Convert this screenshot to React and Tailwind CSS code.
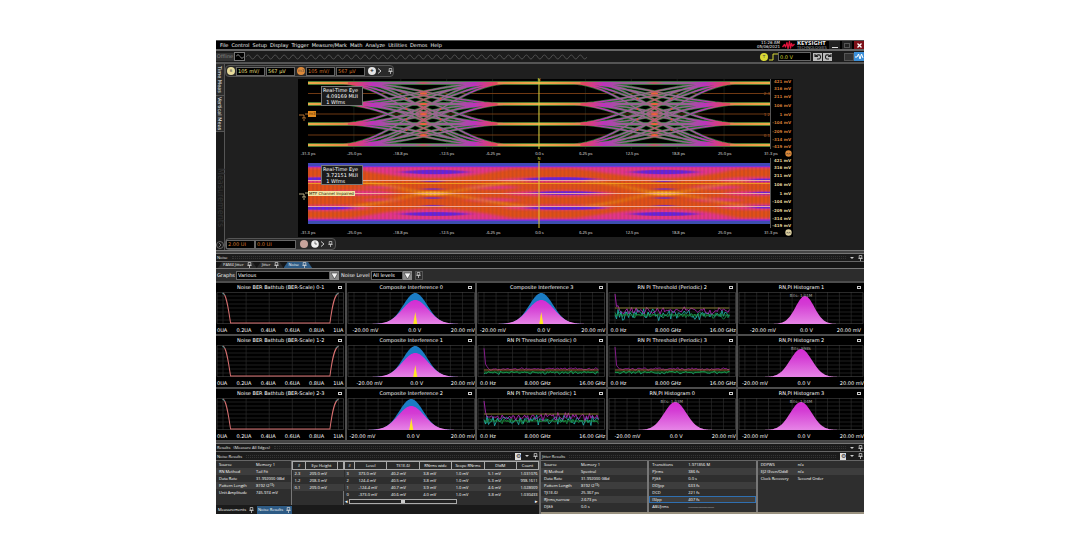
import React from "react";

const LEVELS = [4, 25, 45, 66];
const UI = 231.5;

function seeded(seed) {
  let s = seed;
  return () => {
    s = (s * 16807) % 2147483647;
    return s / 2147483647;
  };
}

function transition(from, to, center, half, mid) {
  const pts = [[mid - UI / 2, from]];
  for (let i = 0; i <= 24; i++) {
    const t = i / 24;
    const k = Math.sin((t - 0.5) * Math.PI);
    pts.push([center - half + 2 * half * t, from + ((to - from) * (k + 1)) / 2]);
  }
  pts.push([mid + UI / 2, to]);
  return "M" + pts.map(([x, y]) => x.toFixed(1) + "," + y.toFixed(1)).join("L");
}

function eyePaths() {
  const out = [];
  [115.75, 347.25].forEach((c) =>
    LEVELS.forEach((a) =>
      LEVELS.forEach((b) => {
        if (a === b) {
          out.push(`M${c - UI / 2},${a}H${c + UI / 2}`);
        } else {
          out.push(transition(a, b, c - 9, 78, c));
          out.push(transition(a, b, c + 9, 78, c));
        }
      })
    )
  );
  return out.join("");
}
const EYE = eyePaths();
const GRID_X = [46, 93, 139, 185, 231, 278, 324, 370, 417];

function EyePlot() {
  return (
    <svg className="h-full w-full block" viewBox="0 0 463 70" preserveAspectRatio="none">
      <defs>
        <linearGradient id="trace" gradientUnits="userSpaceOnUse" x1="0" x2="231.5" y1="0" y2="0" spreadMethod="repeat">
          <stop offset="0" stopColor="#e8a044" />
          <stop offset=".13" stopColor="#e66b38" />
          <stop offset=".2" stopColor="#e04468" />
          <stop offset=".28" stopColor="#bc34bc" />
          <stop offset=".36" stopColor="#9c5c98" />
          <stop offset=".46" stopColor="#96688e" />
          <stop offset=".5" stopColor="#c0586c" />
          <stop offset=".54" stopColor="#96688e" />
          <stop offset=".64" stopColor="#9c5c98" />
          <stop offset=".72" stopColor="#bc34bc" />
          <stop offset=".8" stopColor="#e04468" />
          <stop offset=".87" stopColor="#e66b38" />
          <stop offset="1" stopColor="#e8a044" />
        </linearGradient>
      </defs>
      <rect width="463" height="70" fill="#000" />
      {GRID_X.map((x) => <path key={x} d={`M${x},0V70`} stroke="#222a22" strokeWidth=".6" />)}
      {[14.5, 35, 56].map((y) => <path key={y} d={`M0,${y}H463`} stroke="#8c4718" strokeWidth=".8" />)}
      <path d={EYE} fill="none" stroke="#25752f" strokeWidth="2.6" />
      <path d={LEVELS.map((y) => `M0,${y}H463`).join("")} fill="none" stroke="#25752f" strokeWidth="4" />
      <path d={EYE} fill="none" stroke="url(#trace)" strokeWidth="1.4" />
      {LEVELS.map((y) => <rect key={y} y={y - 1.2} width="463" height="2.4" fill="url(#trace)" />)}
      {LEVELS.map((y) => <path key={y} d={`M190,${y}H273M0,${y}H40M423,${y}H463`} stroke="#f0b850" strokeWidth="1" />)}
      {[115.75, 347.25].map((c) =>
        [14.5, 25, 35, 45, 56].map((y) => <ellipse key={c + y} cx={c} cy={y} rx="3.5" ry="1" fill="#f0603c" />)
      )}
      {[115.75, 347.25].map((c) =>
        [19.5, 30, 40.5, 51].map((y) =>
          [-17, 17].map((d) => <circle key={c + "" + y + d} cx={c + d} cy={y} r="1" fill="#e0503c" />)
        )
      )}
      <path d="M231.5,0V70" stroke="#d8d03a" strokeWidth="1" />
    </svg>
  );
}

function ImpairedPlot() {
  return (
    <svg className="h-full w-full block" viewBox="0 0 463 70" preserveAspectRatio="none">
      <defs>
        <filter id="soft" x="-10%" y="-60%" width="120%" height="220%"><feGaussianBlur stdDeviation="5 .9" /></filter>
        <filter id="soft2" x="-20%" y="-100%" width="140%" height="300%"><feGaussianBlur stdDeviation="6 .6" /></filter>
        <pattern id="stripes" width="4" height="70" patternUnits="userSpaceOnUse"><path d="M1,0V70" stroke="#8b3b2e" strokeOpacity=".4" strokeWidth="1" /></pattern>
        <clipPath id="band"><rect y="5" width="463" height="61" /></clipPath>
      </defs>
      <rect width="463" height="70" fill="#000" />
      <g clipPath="url(#band)">
        <rect y="5" width="463" height="61" fill="#e05018" />
        <g filter="url(#soft)" fill="#e4348c">
          <rect x="-10" y="7" width="483" height="3.500" />
          <rect x="-10" y="60" width="483" height="3.500" />
          <path d="M20,8C60,11 80,20 125,20S190,11 225,8ZM20,63C60,59 80,51 125,51S190,59 225,63Z" />
          <path d="M238,8C290,11 312,20 357,20S420,11 450,8ZM238,63C290,59 312,51 357,51S420,59 450,63Z" />
          <ellipse cx="245" cy="22" rx="55" ry="2.600" /><ellipse cx="252" cy="35.500" rx="54" ry="3" /><ellipse cx="250" cy="49.500" rx="55" ry="2.800" />
          <ellipse cx="10" cy="22" rx="38" ry="3" /><ellipse cx="50" cy="35" rx="38" ry="2.600" /><ellipse cx="20" cy="50" rx="42" ry="3" />
          <ellipse cx="450" cy="22" rx="38" ry="3" /><ellipse cx="445" cy="35.500" rx="28" ry="2.600" /><ellipse cx="450" cy="49" rx="38" ry="3" />
          <path d="M155,29.500Q185,25 215,29.500Q185,33 155,29.500ZM155,42Q185,38 215,42Q185,46 155,42Z" />
          <path d="M380,29.500Q410,25 440,29.500Q410,33 380,29.500ZM380,42Q410,38 440,42Q410,46 380,42Z" />
          <path d="M50,29.500Q75,26 95,29.500Q75,32 50,29.500ZM50,42Q75,39 95,42Q75,45 50,42Z" />
        </g>
        <g filter="url(#soft)" fill="none" stroke="#e9940f" strokeWidth="1.6">
          <path d="M45,23C90,26 100,35 125,35S180,46 220,48M45,48C90,45 100,35 125,35S180,25 220,23" />
          <path d="M277,23C322,26 332,35 357,35S412,46 440,48M277,48C322,45 332,35 357,35S412,25 440,23" />
        </g>
        <g filter="url(#soft2)" fill="#6424e0">
          <ellipse cx="252" cy="21" rx="34" ry="1.8" /><ellipse cx="258" cy="35" rx="34" ry="1.8" /><ellipse cx="258" cy="50" rx="38" ry="1.8" />
          <ellipse cx="127" cy="14" rx="32" ry="2.2" /><ellipse cx="357" cy="14" rx="32" ry="2.2" />
          <ellipse cx="127" cy="56" rx="32" ry="2" /><ellipse cx="357" cy="56" rx="32" ry="2" />
          <ellipse cx="10" cy="21" rx="22" ry="1.8" /><ellipse cx="14" cy="50" rx="30" ry="1.8" />
          <ellipse cx="458" cy="22" rx="14" ry="1.6" /><ellipse cx="458" cy="35" rx="14" ry="1.4" /><ellipse cx="458" cy="49" rx="14" ry="1.6" />
          <ellipse cx="125" cy="23" rx="9" ry="1.2" /><ellipse cx="357" cy="23" rx="9" ry="1.2" />
          <ellipse cx="125" cy="31" rx="7" ry="1" /><ellipse cx="357" cy="31" rx="7" ry="1" />
          <ellipse cx="125" cy="40" rx="7" ry="1" /><ellipse cx="357" cy="40" rx="7" ry="1" />
          <ellipse cx="125" cy="48" rx="9" ry="1.2" /><ellipse cx="357" cy="48" rx="9" ry="1.2" />
        </g>
        <g filter="url(#soft2)" fill="#f7b32b">
          <ellipse cx="125" cy="35.500" rx="15" ry="2.2" /><ellipse cx="357" cy="35.500" rx="15" ry="2.2" />
        </g>
        <rect width="463" height="70" fill="url(#stripes)" />
        <rect y="5" width="463" height="3" fill="#4148b8" /><rect y="8" width="463" height="1.2" fill="#7a30d8" />
        <rect y="61.500" width="463" height="1.500" fill="#7a30d8" /><rect y="63" width="463" height="3" fill="#3c4fb0" />
        <path d="M0,22.500H463M0,35.500H463M0,48.500H463" stroke="#f4b3a0" strokeWidth=".9" />
        <path d="M0,25.500H463" stroke="#f0a020" strokeWidth=".9" />
      </g>
      <path d="M231.500,3V70" stroke="#e0c832" strokeWidth="1" />
    </svg>
  );
}

const TIMES = ["-31.3 ps", "-25.0 ps", "-18.8 ps", "-12.5 ps", "-6.25 ps", "0.0 s", "6.25 ps", "12.5 ps", "18.8 ps", "25.0 ps", "31.3 ps"];
const VOLTS = ["421 mV", "316 mV", "211 mV", "106 mV", "1 mV", "-104 mV", "-209 mV", "-314 mV", "-419 mV"];

function Scope({ plot, count, voltClass, dot, tag, limits }) {
  return (
    <div className="flex h-[79px] bg-black pl-[10px]">
      <div className="flex min-w-0 flex-1 flex-col">
        <div className="relative h-[70px] border-r border-[#555]">
          {plot}
          <div className="absolute left-[13px] top-[7px] border border-[#777] bg-[#1c1c1c] pr-1 pl-px text-[5px] leading-[6px] text-white whitespace-pre">
            <p>Real-Time Eye</p><p>{"  " + count}</p><p>{"  1 Wfms"}</p>
          </div>
          <svg className="absolute -left-[9px] top-[33px] h-[9px] w-[9px]" viewBox="0 0 9 9" fill="none" stroke={dot} strokeWidth=".8"><path d="M0,3H5V6M3,6H7M4,8H6M6,2H9" /></svg>
          {tag}
          <span className="absolute left-1/2 -top-[2px] -translate-x-1/2 text-[4px] leading-[5px] text-[#d8d03a]">N</span>
          <div className="absolute right-0 top-[12px] flex flex-col gap-[16px] text-[4px] leading-[5px] text-[#b0602c]">
            {limits.map((l) => <span key={l}>{l}</span>)}
          </div>
        </div>
        <div className="flex h-[9px] justify-between font-['Open_Sans',sans-serif] text-[4px] leading-[10px] text-[#e4e4e4]">
          {TIMES.map((t) => <span key={t} className="flex w-0 justify-center whitespace-nowrap">{t}</span>)}
        </div>
      </div>
      <div className="w-[22px] shrink-0">
        <div className={"flex h-[70px] flex-col pr-[2px] text-right text-[4px] leading-[5px] font-bold " + voltClass}>
          {VOLTS.map((v, i) => (
            <span key={v} className={i === 0 || i === 8 ? "h-[5px]" : "flex flex-1 items-center justify-end"}>{v}</span>
          ))}
        </div>
        <svg className="ml-auto mr-px mt-px h-[7px] w-[7px]" viewBox="0 0 7 7"><circle cx="3.5" cy="3.5" r="3.2" fill={dot} /><path d="M2,4.5V3L3.5,4L5,3V4.5" stroke="#333" strokeWidth=".5" fill="none" /></svg>
      </div>
    </div>
  );
}

function Pin() {
  return (
    <svg className="h-[6px] w-[5px] shrink-0" viewBox="0 0 5 6" fill="none" stroke="#ddd" strokeWidth=".7"><path d="M1.2,.5H3.8V3.2H1.2ZM.3,3.4H4.7M2.5,3.4V6" /></svg>
  );
}

function Chevron() {
  return <svg className="h-[6px] w-[5px]" viewBox="0 0 5 6" fill="none" stroke="#ccc"><path d="M1,.5L4,3L1,5.5" /></svg>;
}

function Field({ label, value, className }) {
  return <input aria-label={label} defaultValue={value} className={"h-[9px] min-w-0 border border-[#666] bg-black p-0 pl-px text-[5px] leading-[7px] " + className} />;
}

function Dot({ color, label }) {
  return (
    <span className="flex h-2 w-2 shrink-0 items-center justify-center rounded-full text-[4px] leading-none text-[#444]" style={{ background: color }}>{label}</span>
  );
}

function gauss(cx, peak, sigma) {
  let d = "M0,32";
  for (let x = 0; x <= 128; x++) d += `L${x},${(32 - (32 - peak) * Math.exp(-((x - cx) ** 2) / (2 * sigma * sigma))).toFixed(2)}`;
  return d + "L128,32Z";
}

function noise(seed, base, amp, spike) {
  const r = seeded(seed * 7919);
  r();
  let d = "";
  for (let x = 7; x <= 121; x += 1.5) {
    let y = base + (r() + r() - 1) * amp;
    if (spike) y -= x === 7 ? base - 2 : 14 * Math.exp(-(x - 7) / 1.3);
    d += (d ? "L" : "M") + x + "," + Math.max(2, y).toFixed(1);
  }
  return d;
}

function Grid({ n, off }) {
  const xs = [];
  for (let x = off; x < 127; x += n) xs.push(x);
  return (
    <g stroke="#2b2b2b" strokeWidth=".7">
      {xs.map((x) => <path key={x} d={`M${x},0V32`} />)}
      {[4, 8, 12, 16, 20, 24, 28].map((y) => <path key={y} d={`M1,${y}H127`} />)}
      <path d="M1,.4H127V31.6H1Z" fill="none" stroke="#444" />
    </g>
  );
}

function Drawing({ kind, cx, seed, sigma }) {
  return (
    <svg className="block h-8 w-full" viewBox="0 0 128 32" preserveAspectRatio="none">
      <defs><linearGradient id="bell" x1="0" x2="0" y1="0" y2="1"><stop offset="0" stopColor="#d42ad4" /><stop offset=".3" stopColor="#d43cd4" /><stop offset="1" stopColor="#e684e6" /></linearGradient></defs>
      <Grid n={kind === "bath" ? 23 : kind === "rn" || kind === "quiet" ? 14.2 : 12} off={7} />
      {kind === "bath" && <>
        <path d="M7,1C10,2 12,14 14.5,31H113.5C116,12 118,3 122,1" fill="none" stroke="#d87070" strokeWidth="1" />
        <path d="M6,1L9,3M119,3L122,1" stroke="#2a8a8a" strokeWidth=".8" />
      </>}
      {kind === "comp" && <>
        <path d={gauss(cx, 1, 12)} fill="#1b7cc4" />
        <path d={gauss(cx, 8, 13)} fill="url(#bell)" />
        <path d={`M${cx - 2},32L${cx},20L${cx + 2},32Z`} fill="#ffe526" />
      </>}
      {kind === "hist" && <path d={gauss(cx, 4, sigma)} fill="url(#bell)" />}
      {kind === "rn" && <g fill="none" strokeWidth=".8">
        <path d={noise(seed + 50, 23, 4)} stroke="#15954e" />
        <path d={noise(seed, 22.5, 7)} stroke="#22b4b0" />
        <path d={noise(seed + 99, 19, 5, true)} stroke="#b824c0" />
        <path d="M7,16H121" stroke="#9a8a3a" />
        <path d="M7,23H121" stroke="#1f8a32" />
      </g>}
      {kind === "quiet" && <g fill="none" strokeWidth=".8">
        <path d={noise(seed, 27.5, 2)} stroke="#18b87c" />
        <path d={noise(seed + 99, 24, 1.4, true)} stroke="#a01fa8" />
        <path d="M7,25H121" stroke="#c07a38" />
        <path d="M7,27H121" stroke="#1f9a32" />
      </g>}
    </svg>
  );
}

const UA = ["0UA", "0.2UA", "0.4UA", "0.6UA", "0.8UA", "1UA"];
const MV = ["-20.00 mV", "0.0 V", "20.00 mV"];
const HZ = ["0.0 Hz", "8.000 GHz", "16.00 GHz"];
const GRAPHS = [
  { title: "Noise BER Bathtub (BER-Scale) 0-1", kind: "bath", axis: UA, pad: "px-px" },
  { title: "Composite Interference 0", kind: "comp", cx: 68, axis: MV, pad: "pl-[6px]" },
  { title: "Composite Interference 3", kind: "comp", cx: 64, axis: MV, pad: "pl-[3px]" },
  { title: "RN PI Threshold (Periodic) 2", kind: "rn", seed: 77, axis: HZ, pad: "pl-[3px]" },
  { title: "RN,PI Histogram 1", kind: "hist", cx: 68, sigma: 9.5, axis: MV, pad: "pl-[12px] pr-[3px]", bits: "Bits: 1.01M" },
  { title: "Noise BER Bathtub (BER-Scale) 1-2", kind: "bath", axis: UA, pad: "px-px" },
  { title: "Composite Interference 1", kind: "comp", cx: 68, axis: MV, pad: "pl-[10px]" },
  { title: "RN PI Threshold (Periodic) 0", kind: "quiet", seed: 9, axis: HZ, pad: "pl-[3px]" },
  { title: "RN PI Threshold (Periodic) 3", kind: "quiet", seed: 31, axis: HZ, pad: "pl-[3px]" },
  { title: "RN,PI Histogram 2", kind: "hist", cx: 64, sigma: 11, axis: MV, pad: "pl-[4px]", bits: "Bits: 998k" },
  { title: "Noise BER Bathtub (BER-Scale) 2-3", kind: "bath", axis: UA, pad: "px-px" },
  { title: "Composite Interference 2", kind: "comp", cx: 64, axis: MV, pad: "pl-[3px]" },
  { title: "RN PI Threshold (Periodic) 1", kind: "rn", seed: 513, axis: HZ, pad: "pl-[3px]" },
  { title: "RN,PI Histogram 0", kind: "hist", cx: 67, sigma: 11, axis: MV, pad: "pl-[7px]", bits: "Bits: 1.03M" },
  { title: "RN,PI Histogram 3", kind: "hist", cx: 64, sigma: 11, axis: MV, pad: "pl-[4px]", bits: "Bits: 1.04M" },
];

function Graph({ g }) {
  return (
    <figure className="relative min-w-0 overflow-hidden bg-black text-[5px] text-white">
      <figcaption className="flex h-[9px] items-center pr-[3px] pl-[8px] leading-[9px]">
        <span className="flex-1 text-center whitespace-nowrap">{g.title}</span>
        <button aria-label={"Maximize " + g.title} className="h-[3px] w-[4px] border border-[#ccc]" />
      </figcaption>
      <Drawing {...g} />
      {g.bits && <span className="absolute left-0 top-[10px] w-full text-center text-[4px] leading-[5px] text-[#a0a0a0]">{g.bits}</span>}
      <div className={"flex h-[10px] justify-between whitespace-nowrap leading-[12px] " + g.pad}>
        {g.axis.map((a) => <span key={a}>{a}</span>)}
      </div>
    </figure>
  );
}

function TitleBar({ title, gear }) {
  return (
    <div className="flex h-full items-center gap-1 bg-[#1b1b1b] pr-px pl-px font-['Open_Sans',sans-serif] text-[4px] text-[#e8e8e8] whitespace-pre">
      <span>{title}</span>
      <span className="h-[3px] min-w-0 flex-1 border-y border-dotted border-[#343434]" />
      {gear && <button aria-label="Settings" className="flex h-[7px] w-[6px] items-center justify-center bg-[#ddd] text-[6px] leading-none text-[#333]">⚙</button>}
      <button aria-label="Collapse" className="border-x-2 border-t-2 border-x-transparent border-t-[#ccc]" />
      <Pin />
    </div>
  );
}

function Pairs({ rows, valueAt, label }) {
  return (
    <table aria-label={label} className="w-full table-fixed border-collapse">
      <tbody>
        {rows.map(([k, v], i) => (
          <tr key={k} className={(i % 2 ? "bg-[#3d3d3d]" : "bg-[#2e2e2e]") + (k === "ISIpp" ? " outline outline-1 -outline-offset-1 outline-[#2f6fb0]" : "")}>
            <th scope="row" className={"h-[7px] p-0 pl-[3px] text-left font-normal " + valueAt}>{k}</th>
            <td className="p-0">{v}</td>
          </tr>
        ))}
      </tbody>
    </table>
  );
}

function Columns({ head, rows, widths, label }) {
  return (
    <table aria-label={label} className="w-full table-fixed border-collapse">
      <colgroup>{widths.map((w, i) => <col key={i} className={w} />)}</colgroup>
      <thead><tr>{head.map((h, i) => <th key={i} className="h-[7px] overflow-hidden border border-[#aaa] bg-[#2a2a2a] p-0 text-center font-normal whitespace-nowrap">{h}</th>)}</tr></thead>
      <tbody>
        {rows.map((r, i) => (
          <tr key={i} className={i % 2 ? "bg-[#2e2e2e]" : "bg-[#3d3d3d]"}>
            {r.map((c, j) => <td key={j} className={"h-[7px] overflow-hidden p-0 " + (j ? "pl-[4px]" : "pl-[2px]")}>{c}</td>)}
          </tr>
        ))}
      </tbody>
    </table>
  );
}

const MENU = ["File", "Control", "Setup", "Display", "Trigger", "Measure/Mark", "Math", "Analyze", "Utilities", "Demos", "Help"];
const WAVE = "M0,3" + "q2.25,-4 4.5,0q2.25,4 4.5,0".repeat(38);

function Select({ label, value, width }) {
  return (
    <label className="flex items-center">
      <span className="mr-px">{label}</span>
      <select defaultValue={value} className={"h-[9px] appearance-none border border-[#666] bg-black p-0 pl-px text-[5px] leading-[7px] text-white " + width}><option>{value}</option></select>
      <svg className="h-[9px] w-[9px]" viewBox="0 0 9 9"><rect width="9" height="9" fill="#8a8a8a" /><path d="M1,2H8L4.5,8Z" fill="#f4f4f4" stroke="#333" strokeWidth=".6" /></svg>
    </label>
  );
}

function Tab({ label, active }) {
  return (
    <button className={"flex items-center gap-[3px] px-[5px] [clip-path:polygon(4px_0,calc(100%-4px)_0,100%_100%,0_100%)] " + (active ? "bg-[#2d5a84] text-white" : "bg-[#2a2a2a]")}>{label}<Pin /></button>
  );
}

export default function App() {
  return (
    <main className="bg-white pt-10">
      <div className="mx-auto w-3/5 overflow-hidden bg-[#1f1f1f] font-['DejaVu_Sans',sans-serif] text-[5px] leading-[7px] text-[#f0f0f0]">
        <header className="flex h-[11px] items-center overflow-hidden border-t border-b-2 border-t-[#555] border-b-[#666] bg-black">
          <nav className="flex gap-[3px] pl-1">
            {MENU.map((m) => <button key={m}>{m}</button>)}
          </nav>
          <div className="ml-auto flex items-center">
            <div className="mr-[2px] text-right text-[4px] leading-[4px]"><p>11:26 AM</p><p>05/06/2021</p></div>
            <svg className="h-2 w-[13px]" viewBox="0 0 13 8" fill="none" stroke="#e0143c" strokeWidth="1.3" strokeLinejoin="round"><path d="M.5,6L2.5,3.5L3.5,6L5,1.5L6,7.5L7.5,.5L8.5,7L9.5,2.5L10.5,5L12.5,3" /></svg>
            <div className="ml-[2px] w-[32px] font-['Open_Sans',sans-serif]"><p className="text-[6px] leading-[5px] font-bold">KEYSIGHT</p><p className="text-[4px] leading-[3px] text-[#aaa]">TECHNOLOGIES</p></div>
            <button aria-label="Minimize" className="flex h-2 w-[11px] items-end justify-center bg-[#222] pb-px"><span className="h-px w-[6px] bg-[#ddd]" /></button>
            <button aria-label="Maximize" className="ml-[2px] flex h-2 w-[10px] items-center justify-center bg-[#222]"><span className="h-[5px] w-[6px] border border-[#555]" /></button>
            <button aria-label="Close" className="ml-[2px] flex h-2 w-[10px] items-center justify-center bg-[#7c1018]"><svg className="h-[5px] w-[5px]" viewBox="0 0 5 5" stroke="#fff" strokeWidth="1.3"><path d="M.5,.5L4.5,4.5M4.5,.5L.5,4.5" /></svg></button>
          </div>
        </header>

        <div className="flex h-[13px] items-center border-b-2 border-[#555] bg-[#1c1c1c]">
          <button className="h-[8px] w-[18px] bg-[#333] text-[#858585]">Offline</button>
          <button aria-label="Waveform" className="flex h-[9px] w-[11px] items-center justify-center border border-[#777] bg-black"><svg className="h-[5px] w-[8px]" viewBox="0 0 8 5" fill="none" stroke="#999" strokeWidth=".8"><path d="M0,2.5Q2,-1 4,2.5T8,2.5" /></svg></button>
          <svg className="mx-px h-[6px] w-[341px]" viewBox="0 0 342 6" fill="none" stroke="#555" strokeWidth=".9"><path d={WAVE} /></svg>
          <div className="ml-auto flex items-center">
            <Dot color="#d8d835" label="T" />
            <svg className="ml-px h-2 w-[9px]" viewBox="0 0 9 8" fill="none" stroke="#d8d835" strokeWidth="1"><path d="M0,7H4V1H9" /></svg>
            <Field label="Trigger level" value="0.0 V" className="w-[33px] text-[#d8d835]" />
            {[0, 1].map((i) => (
              <button key={i} aria-label={i ? "Redo" : "Undo"} className={"flex h-2 w-[9px] items-center justify-center bg-[#bbb] " + (i ? "ml-px" : "ml-[2px]")}>
                <svg className={"h-[7px] w-[8px] " + (i ? "-scale-x-100" : "")} viewBox="0 0 8 7" fill="none" stroke="#222" strokeWidth="1.1"><path d="M1,1V3.5H4M1.5,3Q6,.5 6.5,3.5T3,6" /></svg>
              </button>
            ))}
            <button aria-label="Tools" className="ml-[12px] h-2 w-[10px] border border-[#555] bg-[#333]" />
            <button aria-label="Waveforms" className="flex h-[9px] w-[10px] items-center justify-center bg-[#3b8fd8]"><svg className="h-[7px] w-[9px]" viewBox="0 0 9 7" fill="none" stroke="#fff" strokeWidth="1"><path d="M0,4H2L3.5,1L5,6L6.5,1L8,5" /></svg></button>
          </div>
        </div>

        <section className="flex h-[186px]">
          <div className="flex w-[9px] shrink-0 flex-col border-r border-[#555] bg-[#1a1a1a]">
            <button className="h-[32px] border-b border-[#555] bg-[#2c2c2c] text-center [writing-mode:vertical-rl] leading-[8px]">Time Meas</button>
            <button className="h-[36px] border-b border-[#555] bg-[#2c2c2c] text-center [writing-mode:vertical-rl] leading-[8px]">Vertical Meas</button>
            <span className="mt-[36px] flex-1 text-[8px] leading-[8px] text-[#343434] [writing-mode:vertical-rl]">Measurements</span>
            <button aria-label="Expand" className="mb-px flex h-[8px] w-[8px] items-center justify-center rounded-full border border-[#666]"><svg className="h-1 w-1" viewBox="0 0 4 4" fill="none" stroke="#888" strokeWidth=".8"><path d="M1,0L3,2L1,4" /></svg></button>
          </div>
          <div className="flex min-w-0 flex-1 flex-col">
            <div className="mt-px flex h-[12px] w-[169px] items-center rounded-sm border border-[#555] bg-[#2a2a2a] pl-px">
              <Dot color="#e8dc9c" label="6" />
              <Field label="Channel 6 scale" value="105 mV/" className="ml-px w-[29px] text-[#f0e080]" />
              <Field label="Channel 6 offset" value="567 μV" className="ml-px mr-[2px] w-[29px] text-[#f0e080]" />
              <Dot color="#dd8a3a" label="m3" />
              <Field label="Memory 3 scale" value="105 mV/" className="ml-px w-[29px] text-[#d8782c]" />
              <Field label="Memory 3 offset" value="567 μV" className="ml-px w-[29px] text-[#d8782c]" />
              <button aria-label="Add channel" className="ml-[3px] flex"><Dot color="#e4e4e4" label="✚" /></button>
              <button aria-label="More channels" className="mx-px"><Chevron /></button>
              <button aria-label="Pin channels" className="ml-[5px]"><Pin /></button>
            </div>
            <div className="mt-[2px] mr-[71px] ml-[73px]">
              <Scope plot={<EyePlot />} count="4.09169 MUI" voltClass="text-[#d07a34]" dot="#dd8a3a" limits={["2.3", "1.2", "0.1"]}
                tag={<span className="absolute left-0 top-[32px] h-[6px] bg-[#e08a20] px-px text-[4px] leading-[6px] text-[#4a2400]">m3</span>} />
              <Scope plot={<ImpairedPlot />} count="3.72151 MUI" voltClass="text-[#e0d29a]" dot="#ddd0a0" limits={[]}
                tag={<span className="absolute left-0 top-[33px] h-[5px] bg-[#f4e4a4] px-px text-[4px] leading-[5px] text-[#2a2000] whitespace-nowrap">MTF Channel Impaired</span>} />
            </div>
            <div className="mt-auto flex h-[12px] w-[111px] items-center rounded-sm border border-[#555] bg-[#2a2a2a]">
              <Field label="Horizontal scale" value="2.00 UI" className="w-[29px] text-[#d8782c]" />
              <Field label="Horizontal position" value="0.0 UI" className="mr-[4px] w-[41px] text-[#d8782c]" />
              <Dot color="#c8a49c" label="" />
              <svg className="ml-[3px] h-2 w-2" viewBox="0 0 8 8"><circle cx="4" cy="4" r="3.8" fill="#f0f0f0" /><path d="M4,1.5V4H6" stroke="#444" strokeWidth=".7" fill="none" /></svg>
              <button aria-label="More" className="mx-px"><Chevron /></button>
              <button aria-label="Pin timebase" className="ml-[2px]"><Pin /></button>
            </div>
          </div>
        </section>

        <div className="h-1 border-y border-[#777] bg-[#444]" />
        <div className="h-2 border-b border-[#666]"><TitleBar title="Noise" /></div>
        <div className="flex h-[7px] border-b border-[#777] bg-[#151515] pl-[2px] font-['Open_Sans',sans-serif] text-[4px] leading-[6px]">
          <Tab label="PAM4 Jitter" /><Tab label="Jitter" /><Tab label="Noise" active />
        </div>
        <div className="flex h-3 items-center bg-[#2c2c2c] pl-px">
          <Select label="Graphs" value="Various" width="w-[94px]" />
          <div className="ml-[2px]"><Select label="Noise Level" value="All levels" width="w-[32px]" /></div>
          <button aria-label="Pin toolbar" className="ml-[3px] flex h-[9px] w-[8px] items-center justify-center border border-[#555]"><Pin /></button>
        </div>

        <section className="grid auto-rows-[51px] grid-cols-[repeat(4,minmax(0,1.02fr))_minmax(0,1fr)] gap-[2px] bg-[#4c4c4c] pt-[2px] pb-px">
          {GRAPHS.map((g) => <Graph key={g.title} g={g} />)}
        </section>

        <div className="h-[3px] border-b border-[#777] bg-[#444]" />
        <div className="h-2 border-b border-[#666]"><TitleBar title="Results   (Measure All Edges)" /></div>
        <section className="flex h-[62px] gap-[2px] bg-[#666] font-['Open_Sans',sans-serif] text-[4px] leading-[7px] text-white">
          <div className="flex min-w-0 flex-1 flex-col">
            <div className="h-[9px] border-b border-[#666]"><TitleBar title="Noise Results" gear /></div>
            <div className="flex h-[44px] gap-px bg-[#777]">
              <div className="w-[75px] shrink-0 bg-[#2e2e2e]">
                <Pairs label="Noise acquisition" valueAt="w-[40px]" rows={[["Source", "Memory 1"], ["RN Method", "Tail Fit"], ["Data Rate", "31.992000 GBd"], ["Pattern Length", <>8192 (2<sup className="text-[3px] leading-none">13</sup>)</>], ["Unit Amplitude", "745.974 mV"]]} />
              </div>
              <div className="w-[51px] shrink-0 bg-[#2e2e2e]">
                <Columns label="Eye heights" widths={["w-[13px]", "w-[32px]", "w-[6px]"]} head={["#", "Eye Height", ""]} rows={[["2-3", "209.0 mV", ""], ["1-2", "208.3 mV", ""], ["0-1", "209.0 mV", ""]]} />
              </div>
              <div className="min-w-0 flex-1 overflow-hidden bg-[#2e2e2e]">
                <Columns label="Noise levels" widths={["w-[10px]", "", "", "", "", "", "w-[22px]"]} head={["#", "Level", "TI(1E-6)", "RNrms wide", "Scope RNrms", "DldM", "Count"]}
                  rows={[["3", "373.0 mV", "40.2 mV", "3.8 mV", "1.0 mV", "5.1 mV", "1.031076"], ["2", "124.4 mV", "40.5 mV", "3.8 mV", "1.0 mV", "5.3 mV", "998.1611"], ["1", "-124.4 mV", "40.7 mV", "3.9 mV", "1.0 mV", "4.6 mV", "1.028009"], ["0", "-373.0 mV", "40.6 mV", "4.0 mV", "1.0 mV", "3.8 mV", "1.030433"]]} />
                <div className="mt-px flex items-center gap-px px-px text-[5px] leading-[5px]">
                  <button aria-label="Scroll left">◂</button>
                  <div className="flex h-[5px] flex-1"><span className="flex w-7/12 items-center justify-center border border-[#aaa] bg-[#222]"><span className="h-[3px] w-[4px] bg-[#ccc]" /></span></div>
                  <button aria-label="Scroll right">▸</button>
                </div>
              </div>
            </div>
            <div className="flex h-[9px] items-center bg-[#1a1a1a] pl-px">
              <button className="flex items-center gap-[3px] px-px">Measurements<Pin /></button>
              <button className="ml-[2px] flex h-[8px] items-center gap-[3px] bg-[#2d5a84] px-px">Noise Results<Pin /></button>
            </div>
          </div>
          <div className="flex min-w-0 flex-1 flex-col">
            <div className="h-[9px] border-b border-[#666]"><TitleBar title="Jitter Results" gear /></div>
            <div className="grid flex-1 grid-cols-3 gap-[2px] border-b-2 border-[#99917f] bg-[#777]">
              <div className="bg-[#2e2e2e]"><Pairs label="Jitter acquisition" valueAt="w-[40px]" rows={[["Source", "Memory 1"], ["RJ Method", "Spectral"], ["Data Rate", "31.992000 GBd"], ["Pattern Length", <>8192 (2<sup className="text-[3px] leading-none">13</sup>)</>], ["TJ(1E-6)", "25.367 ps"], ["RJrms,narrow", "2.673 ps"], ["DJδδ", "0.0 s"]]} /></div>
              <div className="bg-[#2e2e2e]"><Pairs label="Jitter components" valueAt="w-[39px]" rows={[["Transitions", "1.971856 M"], ["PJrms", "386 fs"], ["PJδδ", "0.0 s"], ["DDJpp", "633 fs"], ["DCD", "221 fs"], ["ISIpp", "407 fs"], ["ABUJrms", "--------------------"]]} /></div>
              <div className="bg-[#2e2e2e]"><Pairs label="Clock recovery" valueAt="w-[40px]" rows={[["DDPWS", "n/a"], ["EJ2 (Even/Odd)", "n/a"], ["Clock Recovery", "Second Order"]]} /></div>
            </div>
          </div>
        </section>
      </div>
    </main>
  );
}
